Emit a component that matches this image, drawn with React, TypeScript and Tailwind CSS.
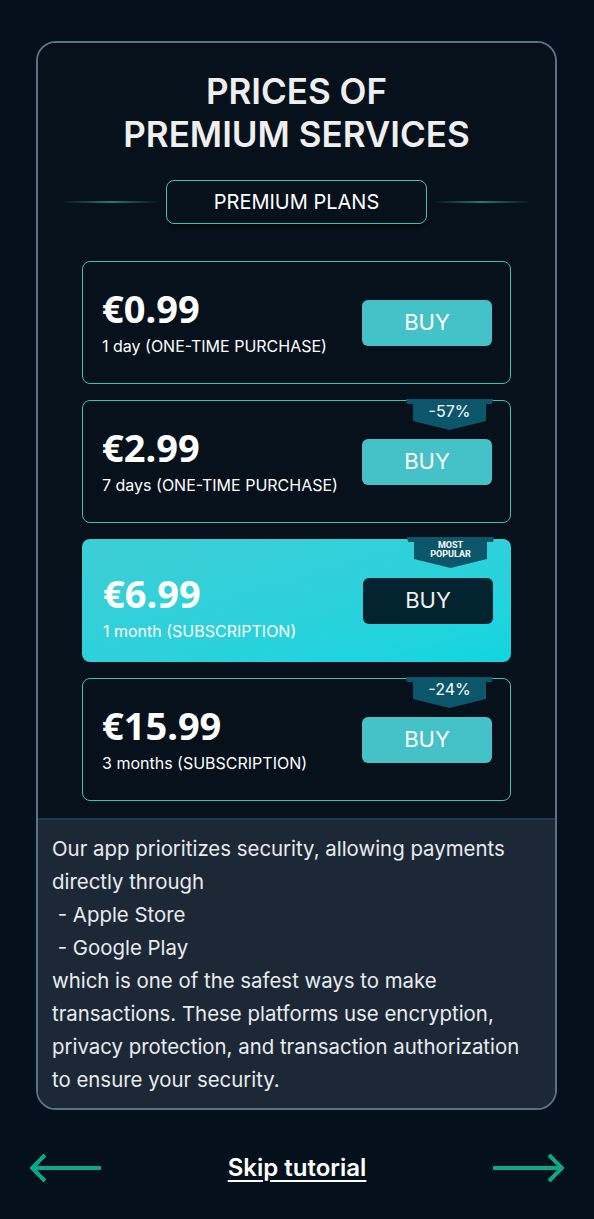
import { ReactNode } from "react";

type Plan = {
  price: string;
  label: string;
  badge?: ReactNode;
  featured?: boolean;
};

const plans: Plan[] = [
  { price: "€0.99", label: "1 day (ONE-TIME PURCHASE)" },
  { price: "€2.99", label: "7 days (ONE-TIME PURCHASE)", badge: <span className="text-[16px] leading-none">-57%</span> },
  {
    price: "€6.99",
    label: "1 month (SUBSCRIPTION)",
    featured: true,
    badge: (
      <span className="text-[9px] font-bold leading-[9px] text-center" style={{ fontFamily: "Roboto, sans-serif" }}>
        MOST
        <br />
        POPULAR
      </span>
    ),
  },
  { price: "€15.99", label: "3 months (SUBSCRIPTION)", badge: <span className="text-[16px] leading-none">-24%</span> },
];

function Ribbon({ children }: { children: ReactNode }) {
  return (
    <div className="absolute -top-[2px] right-[17px] w-[87px] h-[31px]">
      <svg width="87" height="31" viewBox="0 0 87 31" className="absolute inset-0">
        <path d="M0 0 H87 L86 5 H80 V22 L43.5 31 L7 22 V5 H1 Z" fill="#0b566a" />
      </svg>
      <div className="relative flex justify-center pt-[4px] text-white">{children}</div>
    </div>
  );
}

function PlanCard({ plan }: { plan: Plan }) {
  const box = plan.featured
    ? "bg-gradient-to-br from-[#3ecdd6] to-[#10d5df]"
    : "border-[1.5px] border-[#3cc4ad] bg-[#06111c]";
  return (
    <div className={`relative h-[123px] rounded-[8px] flex items-center justify-between pl-[19px] pr-[18px] ${box}`}>
      {plan.badge && <Ribbon>{plan.badge}</Ribbon>}
      <div className={`text-white ${plan.featured ? "pt-[12px] pl-[2px]" : "pb-[2px]"}`}>
        <div className="text-[38px] font-bold leading-[42px]" style={{ fontFamily: "'Noto Sans', sans-serif" }}>
          {plan.price}
        </div>
        <div className="mt-[6px] text-[16px] leading-[22px]">{plan.label}</div>
      </div>
      <button
        className={`w-[130px] h-[46px] rounded-[6px] text-[22px] flex items-center justify-center ${
          plan.featured ? "bg-[#03242e] text-[#f0f0f0]" : "bg-[#45c1c8] text-white"
        }`}
      >
        BUY
      </button>
    </div>
  );
}

export default function App() {
  return (
    <div className="w-[594px] h-[1219px] bg-[#04111c] pt-[41px]" style={{ fontFamily: "Inter, sans-serif" }}>
      <div className="ml-[36px] w-[521px] rounded-[20px] border-2 border-[#5c7086] overflow-hidden">
        {/* Plans */}
        <div className="bg-[#06111c] pt-[27px] pb-[17px] px-[44px]">
          <h1 className="text-center text-[35px] leading-[43px] font-semibold text-[#efefef]">
            PRICES OF
            <br />
            PREMIUM SERVICES
          </h1>
          <div className="mt-[24px] flex items-center justify-center -mx-[20px]">
            <div className="h-[2px] flex-1 mr-[6px] bg-gradient-to-r from-transparent via-[#1f7f72] to-transparent" />
            <div className="w-[261px] h-[44px] rounded-[8px] border-[1.5px] border-[#3cc4ad] flex items-center justify-center text-[20px] text-white shadow-[0_2px_3px_rgba(0,0,0,0.6)]">
              PREMIUM PLANS
            </div>
            <div className="h-[2px] flex-1 ml-[6px] bg-gradient-to-r from-transparent via-[#1f7f72] to-transparent" />
          </div>
          <div className="mt-[37px] flex flex-col gap-[16px]">
            {plans.map((p) => (
              <PlanCard key={p.price} plan={p} />
            ))}
          </div>
        </div>

        {/* Security note */}
        <div className="border-t-2 border-[#1d3a53] bg-[#1d2837] px-[14px] pt-[12px] pb-[12px] text-[20.4px] leading-[33px] text-[#e9ecef]">
          Our app prioritizes security, allowing payments directly through
          <br />
          &nbsp;- Apple Store
          <br />
          &nbsp;- Google Play
          <br />
          which is one of the safest ways to make transactions. These platforms use encryption, privacy protection, and
          transaction authorization to ensure your security.
        </div>
      </div>

      {/* Navigation */}
      <div className="mt-[40px] flex items-center justify-between px-[30px]">
        <svg width="72" height="30" viewBox="0 0 72 30" fill="none" stroke="#0aa98a" strokeWidth="4">
          <path d="M71 15 H3" />
          <path d="M15 2 L2 15 L15 28" />
        </svg>
        <a className="text-[24px] font-semibold text-white underline underline-offset-[4px] decoration-[2px]">Skip tutorial</a>
        <svg width="72" height="30" viewBox="0 0 72 30" fill="none" stroke="#0aa98a" strokeWidth="4">
          <path d="M1 15 H69" />
          <path d="M57 2 L70 15 L57 28" />
        </svg>
      </div>
    </div>
  );
}
